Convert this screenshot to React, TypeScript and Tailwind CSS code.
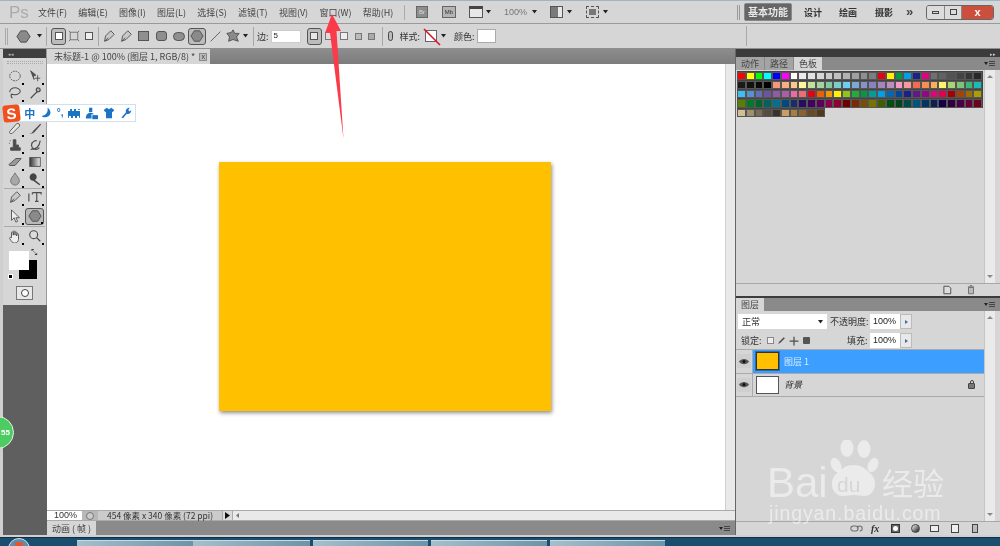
import type { ReactNode } from "react";

// ── Data ───────────────────────────────────────────────────────────────────
const MENUS = [
  "文件(F)",
  "编辑(E)",
  "图像(I)",
  "图层(L)",
  "选择(S)",
  "滤镜(T)",
  "视图(V)",
  "窗口(W)",
  "帮助(H)",
];

const SWATCHES = [
  "#ff0000 #ffff00 #00ff00 #00ffff #0000ff #ff00ff #ffffff #ebebeb #e1e1e1 #d7d7d7 #cbcbcb #c0c0c0 #b2b2b2 #a0a0a0 #8f8f8f #7e7e7e #e60012 #fff100 #009944 #00a0e9 #1d2088 #e4007f #707070 #626262 #535353 #444444 #363636 #282828",
  "#1a1a1a #111111 #090909 #000000 #f7977a #f9ad81 #fdc68a #fff79a #c4df9b #a2d39c #82ca9d #7bcdc8 #6ecff6 #7ea7d8 #8493ca #8882be #a187be #bc8dbf #f49ac2 #f6989d #f26c4f #f68e55 #fbaf5c #fff467 #acd372 #7cc576 #3bb878 #1abbb4",
  "#3cbff3 #5590d0 #6070b8 #6c55a0 #8f5ba5 #a85fa8 #ee6aa7 #f06b78 #e60012 #eb6100 #f39800 #fff100 #8fc31f #22ac38 #009944 #009e96 #00a0e9 #0068b7 #00479d #1d2088 #601986 #920783 #e4007f #e5004f #a40000 #a84200 #9e6b00 #ab9f00",
  "#588100 #007a24 #00662a #00645a #007290 #004a80 #1a2d6a #260e5f #43005f #5c0058 #8c0050 #8f0030 #6e0000 #7a2c00 #7a4e00 #7a7200 #3f5e00 #00500f #00461c #004b45 #005480 #003366 #0e1f52 #16004a #2e0040 #4a0048 #6a0038 #6e0020",
  "#d5be94 #a08e70 #7a6b55 #574b3f #3b312b #c9a063 #a67c45 #8a6232 #6a4a22 #54381a",
].map((row) => row.split(" "));

const TASK_BUTTONS = [
  "w-[116px] mr-0",
  "w-[117px] mr-[3px]",
  "w-[115px] mr-[3px]",
  "w-[116px] mr-[3px]",
  "w-[115px] mr-0",
];

// ── Icons ──────────────────────────────────────────────────────────────────
function Glyph({ size = 14, children }: { size?: number; children: ReactNode }) {
  return (
    <svg width={size} height={size} viewBox="0 0 16 16" className="shrink-0">
      {children}
    </svg>
  );
}

const G = "#6e6e6e";
const D = "#4c4c4c";

function Caret() {
  return (
    <svg width="5" height="4" viewBox="0 0 5 4" className="shrink-0">
      <path d="M0 0h5L2.5 3.5z" fill="#222" />
    </svg>
  );
}

function Sep({ className }: { className: string }) {
  return <div className={`w-px h-[19px] bg-[#a8a8a8] shrink-0 ${className}`} />;
}

const hexagon = <path d="M5 2h6l4 6-4 6H5L1 8z" fill="#8a8a8a" stroke={D} strokeWidth="1" />;
const pen = (
  <path d="M3 14l1-6 6-6 4 4-6 6zM3 14l4-4" fill="#c8c8c8" stroke={D} strokeWidth="1" />
);
const star = (
  <path d="M8 1l2 4 5 0-3 4 2 5-6-2-5 2 1-5-3-4 5-1z" fill="#8a8a8a" stroke={D} strokeWidth="1" />
);

function ToolTile({ children, selected }: { children: ReactNode; selected?: boolean }) {
  return (
    <div
      className={`relative w-[19px] h-[17px] flex items-center justify-center ${
        selected ? "border border-[#555] rounded-[3px] bg-[#b8b8b8]" : ""
      }`}
    >
      {children}
      <span className="absolute right-0 bottom-0 w-[2px] h-[2px] bg-black" />
    </div>
  );
}

const toolIcons: Record<string, ReactNode> = {
  marquee: <ellipse cx="8" cy="8" rx="6" ry="5.5" fill="none" stroke={D} strokeWidth="1" strokeDasharray="2 1" />,
  move: <path d="M3 2l6 5-3 1 1 4zM11 7v7M8 10.500h6" fill={D} stroke={D} strokeWidth="1" />,
  lasso: <path d="M2 7c0-3 3-5 6-5s6 2 6 4-3 4-6 4c-2 0-3 0-4-1M4 9c-1 2 0 4 1 5" fill="none" stroke={D} strokeWidth="1.200" />,
  wand: <path d="M3 14l8-8M11 2c2 0 3 1 3 3-1 2-3 2-4 1-1-2-1-3 1-4z" fill="#bbb" stroke={D} strokeWidth="1.300" />,
  heal: <path d="M2 12l8-9c2-1 4 1 3 3l-8 8c-2 1-4 0-3-2z" fill="#e8e8e8" stroke={D} strokeWidth="1" />,
  brush: <path d="M1 14c3 0 4-1 5-3l8-8 1 1-7 8c-1 2-4 3-7 2z" fill={D} />,
  stamp: <path d="M6 2h3v6h3v3h2v3H3v-3h3zM2 3h1M1 6h1" fill={D} stroke={D} strokeWidth="1" />,
  history: <path d="M3 13c7 0 10-3 11-10M4 9c0-4 3-6 6-6M5 5a5 5 0 1 0 8 6" fill="none" stroke={D} strokeWidth="1.300" />,
  eraser: <path d="M1 11l8-7h6l-7 8H2z" fill="#9a9a9a" stroke={D} strokeWidth="1" />,
  gradient: (
    <>
      <defs>
        <linearGradient id="gr">
          <stop offset="0" stopColor="#333" />
          <stop offset="1" stopColor="#eee" />
        </linearGradient>
      </defs>
      <rect x="2" y="3" width="12" height="10" fill="url(#gr)" stroke={D} />
    </>
  ),
  drop: <path d="M8 1c2 4 5 6 5 9a5 5 0 0 1-10 0c0-3 3-5 5-9z" fill="#a8a8a8" stroke={G} strokeWidth="1" />,
  dodge: <path d="M2 5a4 4 0 1 1 6 4l6 5-1 1-7-5a4 4 0 0 1-4-5z" fill="#444" />,
  pen,
  text: <path d="M1 4v9M5 3h10v2M10 3v10M8 13h4M5 3v2" fill="none" stroke={D} strokeWidth="1.300" />,
  arrow: <path d="M4 1v12l3-3 2 5 2-1-2-4h4z" fill="#eee" stroke={D} strokeWidth="1" />,
  hex: hexagon,
  hand: <path d="M4 8V4c0-1 2-1 2 0v3-4c0-1 2-1 2 0v4-3c0-1 2-1 2 0v4-2c0-1 2-1 2 0v6c0 2-2 4-4 4H7c-2 0-3-2-5-5-1-1 1-2 2-1z" fill="#eee" stroke={D} strokeWidth="1" />,
  zoom: <path d="M10 10l4 4M11 6.500a4.500 4.500 0 1 1-9 0 4.500 4.500 0 0 1 9 0z" fill="#ddd" stroke={D} strokeWidth="1.300" />,
};

function ToolRow({ a, b, selectedB, className = "" }: { a: string; b: string; selectedB?: boolean; className?: string }) {
  return (
    <div className={`flex items-center justify-center gap-[1px] h-[17px] ${className}`}>
      <ToolTile>
        <Glyph>{toolIcons[a]}</Glyph>
      </ToolTile>
      <ToolTile selected={selectedB}>
        <Glyph>{toolIcons[b]}</Glyph>
      </ToolTile>
    </div>
  );
}

function Toolbox() {
  return (
    <div className="w-[44px] h-[256px] bg-[#d6d6d6] border-r border-[#9a9a9a] flex flex-col shrink-0">
      <div className="h-[9px] bg-[#3f3f3f] flex items-center pl-[5px]">
        <span className="text-[5px] leading-none text-[#bbb]">◂◂</span>
      </div>
      <div className="h-[9.500px] flex items-center justify-center shrink-0">
        <div className="w-[36px] h-[3px] border-y border-dotted border-[#aaa]" />
      </div>
      <ToolRow a="marquee" b="move" />
      <ToolRow a="lasso" b="wand" />
      <div className="h-[18px] shrink-0" />
      <ToolRow a="heal" b="brush" />
      <ToolRow a="stamp" b="history" />
      <ToolRow a="eraser" b="gradient" />
      <ToolRow a="drop" b="dodge" />
      <div className="h-px bg-[#aaa] mx-[1px] shrink-0" />
      <ToolRow a="pen" b="text" />
      <ToolRow a="arrow" b="hex" selectedB className="mt-[2px]" />
      <div className="h-px bg-[#aaa] my-[1px] mx-[1px] shrink-0" />
      <ToolRow a="hand" b="zoom" />
      <div className="relative h-[35px] mt-[6.500px] shrink-0">
        <div className="absolute left-[16px] top-[9px] w-[18px] h-[19px] bg-black" />
        <div className="absolute left-[6px] top-0 w-[20px] h-[19px] bg-white" />
        <div className="absolute left-[5px] top-[23px] w-[5px] h-[5px] bg-black border border-white" />
        <span className="absolute left-[28px] top-[-3px] text-[8px] leading-none text-[#333]">⤡</span>
      </div>
      <div className="flex justify-center">
        <div className="w-[17px] h-[14px] bg-[#e8e8e8] border border-[#777] flex items-center justify-center">
          <div className="w-[8px] h-[8px] rounded-full bg-white border border-[#444]" />
        </div>
      </div>
    </div>
  );
}

function OptionIcon({ w = 18, selected, children }: { w?: number; selected?: boolean; children: ReactNode }) {
  return (
    <div
      style={{ width: w }}
      className={`h-[17px] shrink-0 flex items-center justify-center ${
        selected ? "border border-[#555] rounded-[3px] bg-[#bcbcbc]" : ""
      }`}
    >
      {children}
    </div>
  );
}

// ── Bars ───────────────────────────────────────────────────────────────────
function MenuBar() {
  return (
    <div className="h-[24px] bg-[#d6d6d6] border-t border-[#9fb4c4] border-b-[#9a9a9a] border-b flex items-center relative shrink-0">
      <span className="ml-[9px] w-[29px] text-[17px] leading-none text-[#ababab] font-['Liberation_Sans',sans-serif]">
        Ps
      </span>
      <div className="flex w-[361px] gap-[11.300px] shrink-0">
        {MENUS.map((m) => (
          <span key={m} className="shrink-0 text-[9px] leading-none text-[#444] whitespace-nowrap">
            {m}
          </span>
        ))}
      </div>
      <div className="w-px h-[15px] bg-[#aaa] ml-[5px] shrink-0" />
      <div className="ml-[11px] w-[12px] h-[12px] bg-[#8d8d8d] border border-[#666] text-[6px] leading-none flex items-center justify-center text-[#ddd] font-['Liberation_Sans',sans-serif] shrink-0">
        Br
      </div>
      <div className="ml-[14px] w-[14px] h-[12px] bg-[#b4b4b4] border border-[#666] text-[6px] leading-none flex items-center justify-center text-[#333] font-['Liberation_Sans',sans-serif] shrink-0">
        Mb
      </div>
      <div className="ml-[13px] w-[14px] h-[12px] border border-[#555] border-t-[3px] border-t-[#444] bg-[#e8e8e8] shrink-0" />
      <div className="ml-[3px] flex"><Caret /></div>
      <span className="ml-[13px] w-[24px] text-[9px] leading-none text-[#777] font-['Liberation_Sans',sans-serif] shrink-0">
        100%
      </span>
      <div className="ml-[4px] flex"><Caret /></div>
      <div className="ml-[13px] w-[13px] h-[12px] bg-[#7a7a7a] border border-[#555] flex justify-end shrink-0">
        <div className="w-[4px] bg-[#e8e8e8]" />
      </div>
      <div className="ml-[4px] flex"><Caret /></div>
      <div className="ml-[14px] w-[13px] h-[12px] border border-dashed border-[#555] p-[2px] shrink-0">
        <div className="w-full h-full bg-[#777]" />
      </div>
      <div className="ml-[4px] flex"><Caret /></div>
      <div className="ml-[129px] w-[3px] h-[15px] border-x border-[#999] shrink-0" />
      <div className="ml-[4px] w-[48px] h-[18px] bg-[#666] border border-[#888] rounded-[2px] text-[10px] font-bold leading-none text-[#e8e8e8] flex items-center justify-center shrink-0">
        基本功能
      </div>
      <span className="ml-[12px] w-[35px] text-[9px] font-bold leading-none text-[#333] shrink-0">设计</span>
      <span className="w-[36px] text-[9px] font-bold leading-none text-[#333] shrink-0">绘画</span>
      <span className="w-[31px] text-[9px] font-bold leading-none text-[#333] shrink-0">摄影</span>
      <span className="w-[20px] text-[13px] font-bold leading-none text-[#444] font-['Liberation_Sans',sans-serif] shrink-0 pb-[2px]">
        »
      </span>
      <div className="h-[15px] w-[68px] flex rounded-[3px] border border-[#666] overflow-hidden shrink-0">
        <div className="w-[18px] bg-[#dcdcdc] border-r border-[#888] flex items-center justify-center">
          <div className="w-[7px] h-[3px] border border-[#444]" />
        </div>
        <div className="w-[17px] bg-[#dcdcdc] border-r border-[#888] flex items-center justify-center">
          <div className="w-[7px] h-[6px] border border-[#444]" />
        </div>
        <div className="flex-1 bg-[#cc4f3e] text-[11px] leading-none font-bold text-white flex items-center justify-center font-['Liberation_Sans',sans-serif]">
          x
        </div>
      </div>
    </div>
  );
}

function OptionsBar() {
  return (
    <div className="h-[25px] bg-[#d6d6d6] border-b border-[#8f8f8f] flex items-center shrink-0 relative">
      <div className="w-[3px] h-[17px] border-x border-[#aaa] ml-[5px]" />
      <div className="ml-[5px] w-[20px] flex justify-center"><Glyph size={15}>{hexagon}</Glyph></div>
      <div className="ml-[4px] flex"><Caret /></div>
      <div className="w-px h-[19px] bg-[#aaa] ml-[4px]" />
      <div className="ml-[4px]"><OptionIcon w={15} selected><div className="w-[8px] h-[8px] bg-white border border-[#555]" /></OptionIcon></div>
      <OptionIcon w={15}><Glyph size={12}><path d="M3 3h10v10H3zM1 1l3 3M15 1l-3 3M1 15l3-3M15 15l-3-3" fill="none" stroke={G} strokeWidth="1.200" /></Glyph></OptionIcon>
      <OptionIcon w={15}><div className="w-[8px] h-[8px] bg-[#eee] border border-[#555]" /></OptionIcon>
      <Sep className="ml-[2px]" />
      <div className="ml-[1px]" />
      <OptionIcon w={17}><Glyph>{pen}</Glyph></OptionIcon>
      <OptionIcon w={17}><Glyph>{pen}</Glyph></OptionIcon>
      <OptionIcon><div className="w-[11px] h-[10px] bg-[#8f8f8f] border border-[#555]" /></OptionIcon>
      <OptionIcon><div className="w-[11px] h-[10px] bg-[#8f8f8f] border border-[#555] rounded-[3px]" /></OptionIcon>
      <OptionIcon><div className="w-[12px] h-[9px] bg-[#8f8f8f] border border-[#555] rounded-full" /></OptionIcon>
      <OptionIcon selected><Glyph>{hexagon}</Glyph></OptionIcon>
      <OptionIcon><Glyph size={13}><path d="M2 14L14 2" stroke={D} strokeWidth="1" /></Glyph></OptionIcon>
      <OptionIcon><Glyph>{star}</Glyph></OptionIcon>
      <div className="ml-[1px] flex"><Caret /></div>
      <Sep className="ml-[5px]" />
      <span className="ml-[3px] text-[9px] leading-none text-[#333] whitespace-nowrap">边:</span>
      <div className="ml-[2px] w-[30px] h-[13px] bg-white border border-[#ccc] text-[8px] leading-none flex items-center pl-[2px] text-[#222] font-['Liberation_Sans',sans-serif]">
        5
      </div>
      <div className="ml-[6px]"><OptionIcon w={15} selected><div className="w-[8px] h-[8px] bg-[#e8e8e8] border border-[#555]" /></OptionIcon></div>
      <OptionIcon w={15}><div className="w-[8px] h-[8px] bg-[#ddd] border border-[#777]" /></OptionIcon>
      <OptionIcon w={15}><div className="w-[8px] h-[8px] bg-[#eee] border border-[#777]" /></OptionIcon>
      <OptionIcon w={13}><div className="w-[7px] h-[7px] bg-[#bbb] border border-[#777]" /></OptionIcon>
      <OptionIcon w={13}><div className="w-[7px] h-[7px] bg-[#aaa] border border-[#777]" /></OptionIcon>
      <Sep className="ml-[4px]" />
      <div className="ml-[3px]"><OptionIcon w={10}><div className="w-[5px] h-[10px] border border-[#444] rounded-full bg-[#bbb]" /></OptionIcon></div>
      <span className="ml-[4px] text-[9px] leading-none text-[#333] whitespace-nowrap">样式:</span>
      <div className="ml-[5px] relative w-[12px] h-[12px] bg-white border border-[#666]">
        <svg viewBox="0 0 14 14" className="absolute -inset-[2px] w-[16px] h-[16px] overflow-visible">
          <path d="M0 0L14 14" stroke="#e01020" strokeWidth="1.400" />
        </svg>
      </div>
      <div className="ml-[4px] flex"><Caret /></div>
      <span className="ml-[8px] text-[9px] leading-none text-[#333] whitespace-nowrap">颜色:</span>
      <div className="ml-[2px] w-[19px] h-[14px] bg-white border border-[#aaa]" />
      <div className="ml-[250px] w-px h-[20px] bg-[#aaa]" />
    </div>
  );
}

// ── Center ─────────────────────────────────────────────────────────────────
function DocumentArea() {
  return (
    <div className="flex-1 min-w-0 flex flex-col">
      <div className="h-[15px] bg-gradient-to-b from-[#8d8d8d] to-[#7c7c7c] flex shrink-0">
        <div className="w-[163px] bg-[#d6d6d6] flex items-center pl-[7px] gap-[4px] text-[9px] leading-none text-[#444] whitespace-nowrap">
          <span>未标题-1 @ 100% (图层 1, RGB/8) *</span>
          <span className="w-[8px] h-[8px] bg-[#bbb] border border-[#888] text-[7px] leading-none flex items-center justify-center font-['Liberation_Sans',sans-serif]">
            x
          </span>
        </div>
      </div>
      <div className="flex flex-1 min-h-0">
        <div className="flex-1 bg-white flex items-center justify-center pb-[2px] pr-[2px]">
          <div className="w-[332px] h-[249px] bg-[#ffc000] shadow-[1px_2px_4px_rgba(0,0,0,0.45)]" />
        </div>
        <div className="w-[10px] bg-[#e9e9e9] border-l border-[#d0d0d0]" />
      </div>
      <div className="h-[11px] flex items-stretch shrink-0 bg-[#e9e9e9] border-y border-[#aaa] text-[9px] leading-none text-[#333]">
        <div className="w-[35px] bg-white flex items-center pl-[7px] font-['Liberation_Sans',sans-serif]">100%</div>
        <div className="w-[16px] bg-[#b8b8b8] flex items-center justify-center">
          <div className="w-[8px] h-[8px] rounded-full border border-[#777] bg-[#ccc]" />
        </div>
        <div className="w-[124px] bg-[#cbcbcb] flex items-center justify-center whitespace-nowrap text-[8.500px]">
          454 像素 x 340 像素 (72 ppi)
        </div>
        <div className="w-[11px] bg-[#dcdcdc] border-x border-[#aaa] flex items-center justify-center">
          <svg width="5" height="7" viewBox="0 0 5 7"><path d="M0 0l5 3.500L0 7z" fill="#111" /></svg>
        </div>
        <div className="pl-[3px] flex items-center">
          <svg width="3" height="5" viewBox="0 0 3 5"><path d="M3 0L0 2.500 3 5z" fill="#777" /></svg>
        </div>
      </div>
      <div className="h-[14px] bg-[#8a8a8a] flex shrink-0">
        <div className="w-[49px] bg-[#d6d6d6] text-[9px] leading-none text-[#444] flex items-center justify-center whitespace-nowrap">
          动画 ( 帧 )
        </div>
        <PanelMenuIcon />
      </div>
    </div>
  );
}

// ── Right panels ───────────────────────────────────────────────────────────
function PanelTab({ label, active }: { label: string; active?: boolean }) {
  return (
    <div
      className={`h-full px-[5px] flex items-center text-[9px] leading-none ${
        active ? "bg-[#d6d6d6] text-[#444]" : "bg-[#a4a4a4] text-[#444] border-r border-[#888]"
      }`}
    >
      {label}
    </div>
  );
}

function PanelMenuIcon() {
  return (
    <div className="ml-auto mr-[5px] flex items-center gap-[1px]">
      <span className="w-0 h-0 border-x-[2px] border-x-transparent border-t-[3px] border-t-[#222]" />
      <span className="w-[6px] h-[5px] border-y border-[#444] relative after:absolute after:left-0 after:right-0 after:top-[1px] after:h-px after:bg-[#444]" />
    </div>
  );
}

function Scrollbar() {
  return (
    <div className="w-[11px] bg-[#eaeaea] border-l border-[#c4c4c4] flex flex-col items-center justify-between py-[5px] shrink-0">
      <span className="w-0 h-0 border-x-[3px] border-x-transparent border-b-[3px] border-b-[#888]" />
      <span className="w-0 h-0 border-x-[3px] border-x-transparent border-t-[3px] border-t-[#888]" />
    </div>
  );
}

function SwatchesPanel() {
  return (
    <div className="h-[247px] flex flex-col shrink-0">
      <div className="h-[8px] bg-[#3c3c3c] flex items-center justify-end pr-[4px] shrink-0">
        <span className="text-[5px] leading-none text-[#ccc]">▸▸</span>
      </div>
      <div className="h-[13px] bg-[#8a8a8a] flex items-stretch shrink-0">
        <PanelTab label="动作" />
        <PanelTab label="路径" />
        <PanelTab label="色板" active />
        <PanelMenuIcon />
      </div>
      <div className="flex-1 flex min-h-0">
        <div className="w-[248px] pl-[0.500px] pt-[1px] flex flex-col items-start shrink-0">
          {SWATCHES.map((row, i) => (
            <div key={i} className="flex bg-[#444] p-[0.5px]">
              {row.map((c, j) => (
                <div
                  key={j}
                  style={{ backgroundColor: c }}
                  className="w-[8.750px] h-[8.300px] border-[0.5px] border-[#555]"
                />
              ))}
            </div>
          ))}
        </div>
        <Scrollbar />
      </div>
      <div className="h-[13px] border-t border-[#a8a8a8] flex items-center justify-end gap-[14px] pr-[24px] shrink-0">
        <Glyph size={10}>
          <path d="M3 2h8l3 3v9H3z" fill="#ddd" stroke={D} strokeWidth="1.500" />
        </Glyph>
        <Glyph size={10}>
          <path d="M4 4h8v10H4zM3 3h10M6 1h4" fill="#bbb" stroke={G} strokeWidth="1.500" />
        </Glyph>
      </div>
    </div>
  );
}

function NumberField() {
  return (
    <div className="flex h-[15px] shrink-0">
      <div className="w-[30px] bg-white text-[9px] leading-none text-[#222] flex items-center pl-[3px] font-['Liberation_Sans',sans-serif]">
        100%
      </div>
      <div className="w-[12px] bg-[#e8e8e8] border border-[#bbb] flex items-center justify-center">
        <span className="w-0 h-0 border-y-[2px] border-y-transparent border-l-[3px] border-l-[#3c6ea8]" />
      </div>
    </div>
  );
}

function LayerRow({
  thumb,
  label,
  selected,
  background,
}: {
  thumb: string;
  label: string;
  selected?: boolean;
  background?: boolean;
}) {
  return (
    <div className="h-[23.500px] flex border-b border-[#aaa] shrink-0">
      <div className="w-[17px] border-r border-[#aaa] flex items-center justify-center">
        <div className="w-[14px] h-[14px] bg-[#cfcfcf] flex items-center justify-center">
          <svg width="10" height="7" viewBox="0 0 10 7">
            <path d="M0 3.500C2 0 8 0 10 3.500 8 7 2 7 0 3.500z" fill="#555" />
            <circle cx="5" cy="3.500" r="1.500" fill="#111" />
          </svg>
        </div>
      </div>
      <div className={`flex-1 flex items-center pl-[3px] ${selected ? "bg-[#3c9eff]" : ""}`}>
        <div
          style={{ backgroundColor: thumb }}
          className={`w-[23px] h-[18px] border ${selected ? "border-[#333] outline outline-1 outline-[#2a6bb0]" : "border-[#555]"}`}
        />
        <span
          className={`ml-[5px] text-[9px] leading-none ${
            selected ? "text-[#d8ecff]" : "italic text-[#333]"
          }`}
        >
          {label}
        </span>
        {background && (
          <div className="ml-auto mr-[9px] w-[7px] h-[6px] mt-[2px] bg-[#777] border border-[#444] rounded-[1px] relative before:absolute before:left-[0.5px] before:top-[-4px] before:w-[4px] before:h-[4px] before:border before:border-[#444] before:rounded-t-full" />
        )}
      </div>
    </div>
  );
}

function LayersPanel() {
  return (
    <div className="flex-1 flex flex-col min-h-0 border-t-2 border-[#3c3c3c]">
      <div className="h-[13px] bg-[#8a8a8a] flex items-stretch shrink-0">
        <PanelTab label="图层" active />
        <PanelMenuIcon />
      </div>
      <div className="flex-1 flex min-h-0">
        <div className="w-[248px] flex flex-col shrink-0">
          <div className="h-[21px] flex items-center pl-[2px] shrink-0">
            <div className="w-[89px] h-[15px] bg-white flex items-center justify-between px-[4px] text-[9px] leading-none text-[#333]">
              正常
              <Caret />
            </div>
            <span className="ml-[3px] w-[40px] text-[9px] leading-none text-[#333] whitespace-nowrap">不透明度:</span>
            <NumberField />
          </div>
          <div className="h-[18px] flex items-center pl-[5px] border-b border-[#aaa] shrink-0">
            <span className="w-[26px] text-[9px] leading-none text-[#333] whitespace-nowrap">锁定:</span>
            <div className="w-[7px] h-[7px] bg-[#eee] border border-[#888]" />
            <div className="ml-[3px] flex"><Glyph size={9}><path d="M2 14l2-4 8-8 2 2-8 8z" fill={D} /></Glyph></div>
            <div className="ml-[3px] flex"><Glyph size={10}><path d="M8 1v14M1 8h14" stroke={D} strokeWidth="2" /></Glyph></div>
            <div className="ml-[4px] w-[7px] h-[7px] bg-[#555] rounded-[1px]" />
            <span className="ml-[37px] w-[23px] text-[9px] leading-none text-[#333] whitespace-nowrap">填充:</span>
            <NumberField />
          </div>
          <LayerRow thumb="#ffc000" label="图层 1" selected />
          <LayerRow thumb="#ffffff" label="背景" background />
          <div className="flex-1" />
        </div>
        <Scrollbar />
      </div>
      <div className="h-[14px] border-t border-[#a8a8a8] flex items-center shrink-0 pl-[114px] gap-[8px]">
        <Glyph size={13}><path d="M1 8a3 3 0 0 1 3-3h3a3 3 0 0 1 0 6H4a3 3 0 0 1-3-3zM9 8a3 3 0 0 1 3-3 3 3 0 0 1 0 6" fill="none" stroke={G} strokeWidth="1.300" /></Glyph>
        <span className="w-[12px] text-[10px] italic font-bold leading-none text-[#333] font-['Liberation_Serif',serif]">fx</span>
        <div className="w-[9px] h-[9px] bg-[#666] border border-[#333] flex items-center justify-center">
          <div className="w-[5px] h-[5px] rounded-full bg-white" />
        </div>
        <div className="ml-[3px] w-[9px] h-[9px] rounded-full bg-gradient-to-br from-white to-[#222] border border-[#444]" />
        <div className="ml-[2px] w-[9px] h-[7px] bg-[#eee] border border-[#444]" />
        <div className="ml-[4px] w-[8px] h-[9px] bg-[#eee] border border-[#444]" />
        <div className="ml-[5px] w-[6px] h-[9px] bg-[#bbb] border border-[#444]" />
      </div>
    </div>
  );
}

// ── Overlays ───────────────────────────────────────────────────────────────
function SogouBar() {
  return (
    <div className="absolute left-[3px] top-[104px] flex items-center">
      <div className="w-[17px] h-[17px] rounded-[3px] bg-[#f0501e] -rotate-6 text-white font-bold text-[15px] leading-none flex items-center justify-center z-10 font-['Liberation_Sans',sans-serif]">
        S
      </div>
      <div className="ml-[-3px] w-[119px] h-[18px] bg-white border border-[#cfe0f0] flex items-center justify-around pl-[4px] pr-[1px] text-[#1c74c5]">
        <span className="text-[11px] font-bold leading-none">中</span>
        <Glyph size={12}><path d="M10 1c1 5-1 10-8 11 3 3 11 2 12-4 0-3-2-6-4-7z" fill="#1c74c5" /></Glyph>
        <span className="text-[10px] font-bold leading-none font-['Liberation_Sans',sans-serif]">°,</span>
        <div className="w-[12px] h-[9px] rounded-[1px] bg-[#1c74c5] border-t-2 border-b-2 border-dotted border-white" />
        <Glyph size={13}><path d="M5 1h4v5H5zM1 14c0-5 3-7 6-7s3 1 4 2H8v5z" fill="#1c74c5" /><rect x="9" y="10" width="7" height="5" fill="#1c74c5" /></Glyph>
        <Glyph size={12}><path d="M5 1L1 4l2 3 1-1v9h8V6l1 1 2-3-4-3-3 2z" fill="#1c74c5" /></Glyph>
        <Glyph size={12}><path d="M2 14l6-7c-1-3 1-6 5-6l-2 3 2 2 2-2c0 4-3 6-6 5l-5 6z" fill="#1c74c5" /></Glyph>
      </div>
    </div>
  );
}

function RedArrow() {
  return (
    <svg width="1000" height="546" viewBox="0 0 1000 546" className="absolute left-0 top-0 pointer-events-none">
      <path d="M332 14L341 31 336.500 31 343.500 139 330 33 325 33z" fill="#fb3b49" />
    </svg>
  );
}

function GreenBadge() {
  return (
    <div className="absolute left-[-19px] top-[416px] w-[33px] h-[33px] rounded-full bg-[#4dcc62] border border-[#e4f4e6] flex items-center justify-end pr-[3px] text-[8px] font-bold leading-none text-white font-['Liberation_Sans',sans-serif]">
      55
    </div>
  );
}

function Watermark() {
  return (
    <div className="absolute left-[766px] top-[438px] w-[190px] h-[85px] pointer-events-none text-white/50">
      <span className="absolute left-[1px] top-[24px] text-[42px] leading-none font-['Liberation_Sans',sans-serif]">Bai</span>
      <svg width="60" height="60" viewBox="0 0 60 60" className="absolute left-[60px] top-[2px]">
        <g fill="#ffffff" fillOpacity="0.5">
          <ellipse cx="21" cy="8" rx="6.500" ry="9" />
          <ellipse cx="38" cy="9" rx="6.500" ry="9" />
          <ellipse cx="10" cy="25" rx="5" ry="7.500" transform="rotate(-25 10 25)" />
          <ellipse cx="47" cy="25" rx="5" ry="7.500" transform="rotate(25 47 25)" />
          <path d="M28 25c8 0 13 5 18 10 6 7 3 21-8 21-4 0-6-1-10-1s-7 1-11 1c-11 0-14-14-8-21 5-5 10-10 19-10z" />
        </g>
      </svg>
      <span className="absolute left-[71px] top-[36px] text-[21px] leading-none text-[#d6d6d6] font-['Liberation_Sans',sans-serif]">du</span>
      <span className="absolute left-[116px] top-[28px] text-[31px] leading-none font-['Noto_Sans_CJK_SC',sans-serif]">经验</span>
      <span className="absolute left-[3px] top-[66px] text-[19.500px] leading-none tracking-[0.9px] whitespace-nowrap font-['Liberation_Sans',sans-serif]">jingyan.baidu.com</span>
    </div>
  );
}

function Taskbar() {
  return (
    <div className="h-[9px] bg-[#1b4e6e] relative flex items-end pl-[77px] shrink-0 overflow-hidden border-t border-[#0f2f48]">
      <div className="absolute left-[8px] top-[0px] w-[22px] h-[22px] rounded-full bg-[#5a8fb0] border border-[#cfe0ea] flex justify-center pt-[3px]">
        <div className="w-[8px] h-[8px] bg-[#e2572a] rounded-[1px]" />
      </div>
      {TASK_BUTTONS.map((c, i) => (
        <div
          key={i}
          className={`h-[6px] shrink-0 bg-gradient-to-r from-[#a4c0cc] to-[#6c93a8] border-t border-[#c6dbe4] ${c}`}
        />
      ))}
    </div>
  );
}

// ── App ────────────────────────────────────────────────────────────────────
export default function App() {
  return (
    <div className="relative w-[1000px] h-[546px] overflow-hidden flex flex-col bg-[#d6d6d6] font-['Noto_Sans_CJK_SC',sans-serif] blur-[0.4px]">
      <MenuBar />
      <OptionsBar />
      <div className="flex-1 flex min-h-0">
        <div className="w-[47px] flex shrink-0">
          <div className="w-[3px] bg-[#cfcfcf]" />
          <div className="flex-1 flex flex-col bg-[#5f5f5f]">
            <Toolbox />
          </div>
        </div>
        <DocumentArea />
        <div className="w-[265px] flex flex-col shrink-0 bg-[#d6d6d6] border-l border-[#666]">
          <SwatchesPanel />
          <LayersPanel />
        </div>
      </div>
      <div className="h-[2px] bg-[#d0d0d0] shrink-0" />
      <Taskbar />
      <SogouBar />
      <RedArrow />
      <GreenBadge />
      <Watermark />
    </div>
  );
}
